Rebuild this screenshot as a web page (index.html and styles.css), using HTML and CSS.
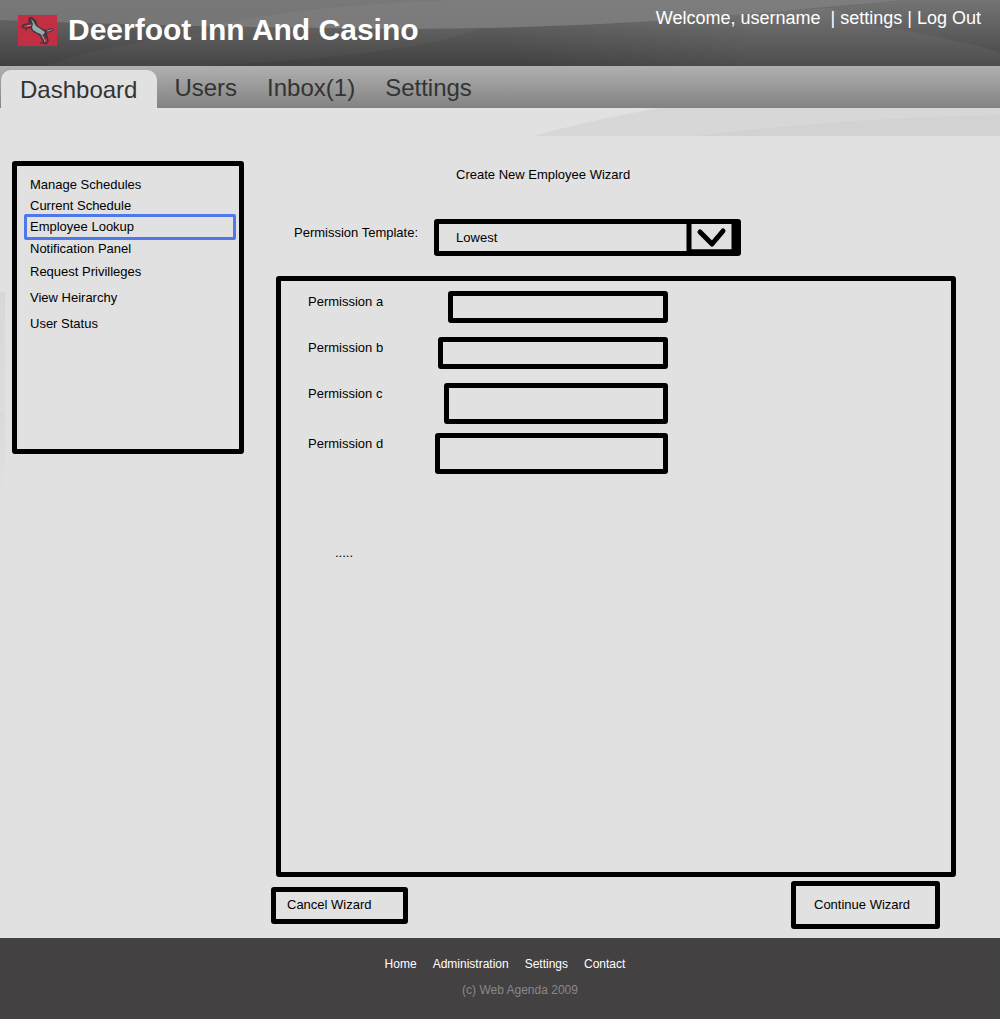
FILE: index.html
```html
<!DOCTYPE html>
<html lang="en">
<head>
<meta charset="utf-8">
<meta name="viewport" content="width=device-width, initial-scale=1">
<title>Deerfoot Inn And Casino</title>
<link rel="stylesheet" href="styles.css">
</head>
<body>
<header class="header">
  <svg class="header-art" viewBox="0 0 1000 66" preserveAspectRatio="none" aria-hidden="true">
    <defs>
      <linearGradient id="glow" x1="0" y1="0" x2="0" y2="1">
        <stop offset="0" stop-color="#fff" stop-opacity=".06"/>
        <stop offset="1" stop-color="#fff" stop-opacity=".16"/>
      </linearGradient>
      <linearGradient id="haze" x1="0" y1="0" x2="1" y2="0">
        <stop offset="0" stop-color="#fff" stop-opacity="0"/>
        <stop offset=".5" stop-color="#fff" stop-opacity=".07"/>
        <stop offset="1" stop-color="#fff" stop-opacity=".07"/>
      </linearGradient>
    </defs>
    <path fill="url(#glow)" d="M0 0H905Q740 15 640 22Q520 29 400 29Q180 27 0 20Z"/>
    <path fill="#fff" fill-opacity=".03" d="M45 66Q120 40 240 28Q320 29 400 29Q440 29 480 28Q420 55 200 66Z"/>
    <path fill="#fff" fill-opacity=".04" d="M200 28Q300 5 460 0H905Q740 15 640 22Q520 29 400 29Z"/>
    <path fill="url(#haze)" d="M500 28Q580 27 640 22Q780 10 830 8L880 26Q950 38 1000 52V66H500Z"/>
    <path fill="#fff" fill-opacity=".03" d="M905 0H1000V52Q950 38 880 26L830 8Z"/>
  </svg>
  <div class="brand">
    <svg class="logo" viewBox="0 0 39 31" aria-hidden="true">
      <rect width="39" height="31" fill="#c22f43"/>
      <path fill="none" stroke="#4a3038" stroke-width="1.4" stroke-linecap="round" stroke-linejoin="round" d="M13 9L9 9L5 10L4 12L7 13M14 12L9 13L8 15M25 19L28 22L26 25M22 20L24 24L27 28L23 28M28 17L30 26L28 29M28 16Q32 18 35 14"/>
      <path fill="#45363b" d="M11 2L14 2L18 5L20 11L25 14L28 15L34 13L35 15L31 17L28 17L28 20L25 21L22 21L19 19L15 17L12 13L14 10L12 8L10 7Z"/>
      <path fill="#95abad" d="M13 4L15 6L18 11L24 15L27 17L25 20L20 18L15 15L14 12L15 9Z"/>
      <path fill="none" stroke="#95abad" d="M13 10L9 11M23 19L26 24L27 27M29 16Q33 16 34 14"/>
    </svg>
    <span class="title">Deerfoot Inn And Casino</span>
  </div>
  <div class="account">
    <span>Welcome, username</span>
    <span class="account-links">| <a href="#">settings</a> | <a href="#">Log Out</a></span>
  </div>
</header>
<nav class="tabs" aria-label="Main">
  <a class="tab tab-active" href="#">Dashboard</a>
  <a class="tab" href="#">Users</a>
  <a class="tab" href="#">Inbox(1)</a>
  <a class="tab" href="#">Settings</a>
</nav>
<div class="banner">
  <svg class="banner-art" viewBox="0 0 1000 28" preserveAspectRatio="none" aria-hidden="true">
    <path fill="#d7d7d7" d="M534 28Q590 12 660 0H1000V28Z"/>
    <path fill="#d2d2d2" d="M695 28Q840 10 1000 7V28Z"/>
  </svg>
</div>
<main class="page">
  <nav class="sidebar" aria-label="Employees">
    <a class="side-link" href="#">Manage Schedules</a>
    <a class="side-link" href="#">Current Schedule</a>
    <a class="side-link side-active" href="#">Employee Lookup</a>
    <a class="side-link" href="#">Notification Panel</a>
    <a class="side-link side-roomy" href="#">Request Privilleges</a>
    <a class="side-link side-roomy" href="#">View Heirarchy</a>
    <a class="side-link side-roomy" href="#">User Status</a>
  </nav>
  <form class="wizard">
    <h1 class="wizard-title">Create New Employee Wizard</h1>
    <div class="template">
      <label class="template-label" for="template">Permission Template:</label>
      <div class="select">
        <select id="template"><option>Lowest</option></select>
        <svg class="select-arrow" viewBox="0 0 56 37" aria-hidden="true">
          <path fill="none" stroke="#000" stroke-width="5" stroke-linejoin="round" d="M4 2H49V33H4Z"/>
          <path stroke="#000" stroke-width="5" d="M51 2V34M4 33H51"/>
          <path fill="none" stroke="#000" stroke-width="5" stroke-linecap="round" stroke-linejoin="round" d="M15 13L27 25L38 12"/>
        </svg>
      </div>
    </div>
    <div class="permissions">
      <div class="row"><label for="pa">Permission a</label><input class="field field-a" id="pa" type="text"></div>
      <div class="row"><label for="pb">Permission b</label><input class="field field-b" id="pb" type="text"></div>
      <div class="row row-tall"><label for="pc">Permission c</label><input class="field field-c" id="pc" type="text"></div>
      <div class="row row-tall"><label for="pd">Permission d</label><input class="field field-d" id="pd" type="text"></div>
      <p class="more">.....</p>
    </div>
    <div class="actions">
      <button class="button cancel" type="button">Cancel Wizard</button>
      <button class="button continue" type="submit">Continue Wizard</button>
    </div>
  </form>
</main>
<footer class="footer">
  <nav class="footer-links" aria-label="Footer">
    <a href="#">Home</a>
    <a href="#">Administration</a>
    <a href="#">Settings</a>
    <a href="#">Contact</a>
  </nav>
  <p class="copyright">(c) Web Agenda 2009</p>
</footer>
</body>
</html>
```

FILE: styles.css
```css
* {
  box-sizing: border-box;
}

body {
  margin: 0;
  min-height: 100vh;
  display: flex;
  flex-direction: column;
  background: #e1e1e1;
  color: #000;
  font: 13px/20px "Liberation Sans", Arial, sans-serif;
}

a {
  color: inherit;
  text-decoration: none;
}

p,
h1 {
  margin: 0;
}

/* Header */
.header {
  position: relative;
  display: flex;
  justify-content: space-between;
  align-items: flex-start;
  height: 66px;
  padding: 8px 19px 0 18px;
  background: linear-gradient(#707070, #404040);
  color: #fff;
}

.header-art {
  position: absolute;
  inset: 0;
  width: 100%;
  height: 100%;
}

.brand,
.account {
  position: relative;
  display: flex;
}

.brand {
  align-items: center;
  gap: 11px;
}

.logo {
  width: 39px;
  height: 31px;
}

.title {
  font-size: 30px;
  line-height: 44px;
  font-weight: bold;
}

.account {
  gap: 10px;
  font-size: 18px;
}

/* Main tabs */
.tabs {
  display: flex;
  height: 42px;
  padding: 4px 1px 0;
  background: linear-gradient(#b0b0b0, #828282);
  color: #333;
  font-size: 24px;
  line-height: 36px;
}

.tab {
  padding: 0 15px;
}

.tab-active {
  margin-right: 2px;
  padding: 2px 20px 0 19px;
  border-radius: 10px 10px 0 0;
  background: #e1e1e1;
}

.banner {
  height: 28px;
}

.banner-art {
  display: block;
  width: 100%;
  height: 100%;
}

/* Page body */
.page {
  flex: 1;
  display: flex;
  align-items: flex-start;
  gap: 27px;
  padding: 25px 44px 7px 12px;
  background:
    linear-gradient(#d8d8d8, #dcdcdc) 0 156px / 5px 120px no-repeat,
    linear-gradient(#d9d9d9, #e1e1e1) 0 276px / 5px 84px no-repeat;
}

.sidebar {
  display: flex;
  flex-direction: column;
  width: 232px;
  min-height: 293px;
  padding: 8px 3px;
  border: 5px solid #000;
  border-radius: 3px;
}

.side-link {
  padding: 0 10px;
  line-height: 21px;
}

.side-active {
  margin: -2px 0 -2px 4px;
  padding: 0 3px;
  border: 3px solid #4f79ea;
  border-radius: 2px;
  line-height: 20px;
}

.side-roomy {
  line-height: 26px;
}

.wizard {
  flex: 1;
  display: flex;
  flex-direction: column;
}

.wizard-title {
  padding: 4px 0 0 185px;
  font-size: 13px;
  line-height: 20px;
  font-weight: normal;
}

.template {
  display: flex;
  gap: 16px;
  padding: 34px 0 0 23px;
}

.template-label {
  padding-top: 4px;
}

.select {
  position: relative;
  width: 307px;
}

.select select {
  appearance: none;
  display: block;
  width: 100%;
  height: 37px;
  margin: 0;
  padding: 0 56px 0 17px;
  border: 5px solid #000;
  border-radius: 3px;
  background: #e1e1e1;
  color: #000;
  font: inherit;
}

.select-arrow {
  position: absolute;
  top: 0;
  right: 0;
  width: 56px;
  height: 37px;
  pointer-events: none;
}

.permissions {
  min-height: 601px;
  margin: 20px 0 0 5px;
  padding: 10px 27px;
  border: 5px solid #000;
  border-radius: 3px;
}

.row {
  display: flex;
  justify-content: space-between;
  align-items: flex-start;
  width: 360px;
  height: 46px;
  line-height: 22px;
}

.row-tall {
  height: 50px;
}

.field {
  height: 32px;
  padding: 0 8px;
  border: 5px solid #000;
  border-radius: 3px;
  background: transparent;
  font: inherit;
}

.row-tall .field {
  height: 41px;
}

.field-a {
  width: 220px;
}

.field-b {
  width: 230px;
}

.field-c {
  width: 224px;
}

.field-d {
  width: 233px;
}

.more {
  padding: 60px 0 0 27px;
}

.actions {
  display: flex;
  justify-content: space-between;
  align-items: center;
  padding: 4px 16px 0 0;
}

.button {
  border: 5px solid #000;
  border-radius: 3px;
  background: transparent;
  color: #000;
  font: inherit;
  text-align: left;
}

.cancel {
  width: 137px;
  height: 37px;
  padding: 0 11px;
}

.continue {
  width: 149px;
  height: 48px;
  padding: 0 18px;
}

/* Footer */
.footer {
  display: flex;
  flex-direction: column;
  align-items: center;
  gap: 6px;
  min-height: 81px;
  padding: 16px 0 0 10px;
  background: #434142;
  color: #fff;
  font-size: 12px;
}

.footer-links {
  display: flex;
  gap: 16px;
}

.copyright {
  padding-left: 30px;
  color: #8a8889;
}
```
